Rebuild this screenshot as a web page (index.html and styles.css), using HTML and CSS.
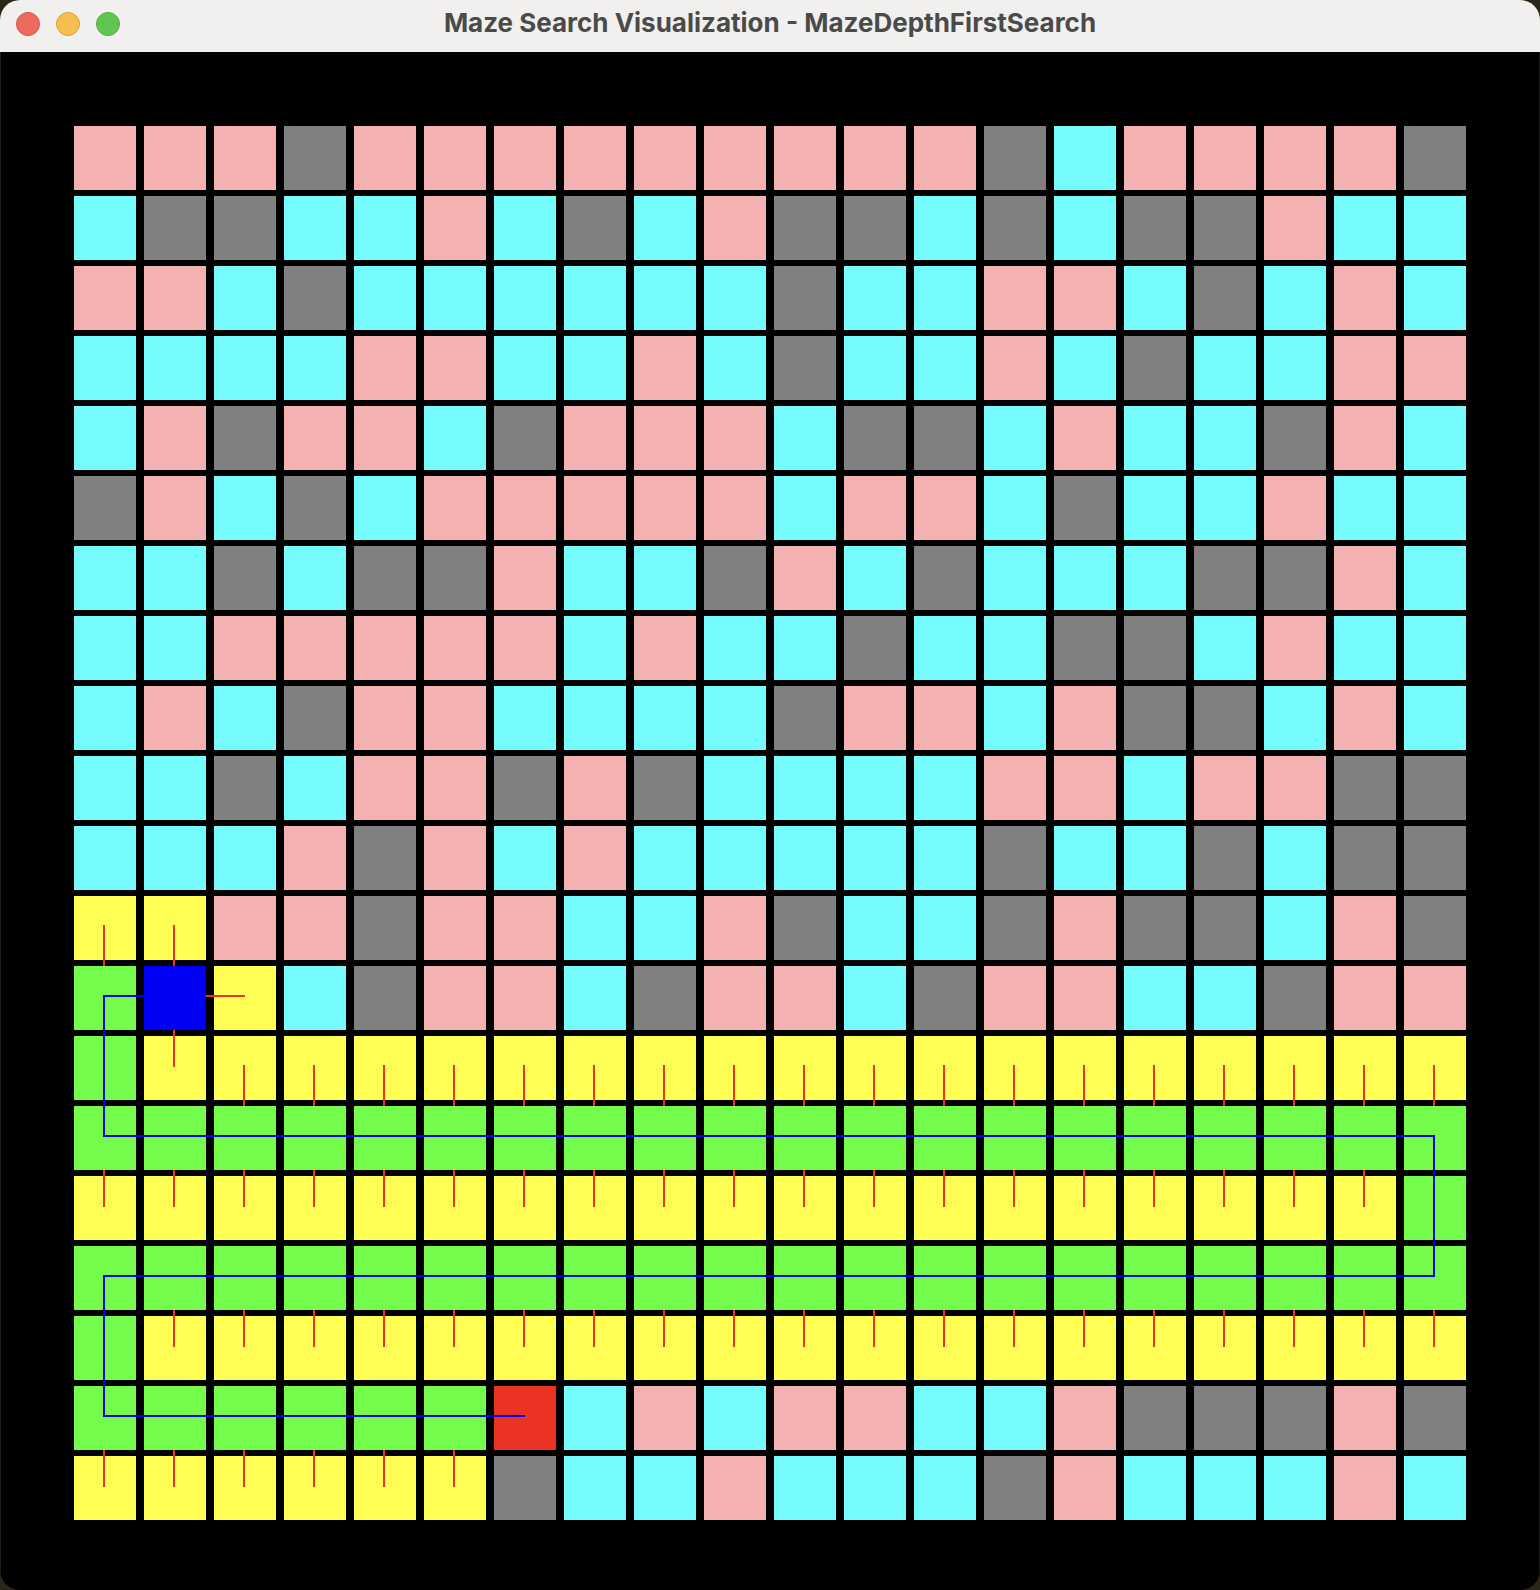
FILE: index.html
```html
<!DOCTYPE html>
<html lang="en">
<head>
<meta charset="utf-8">
<meta name="viewport" content="width=device-width, initial-scale=1">
<title>Maze Search Visualization - MazeDepthFirstSearch</title>
<link rel="stylesheet" href="styles.css">
</head>
<body>
<div class="window">
  <header class="titlebar">
    <div class="controls">
      <button class="control control-close" type="button" aria-label="Close"></button>
      <button class="control control-minimize" type="button" aria-label="Minimize"></button>
      <button class="control control-zoom" type="button" aria-label="Zoom"></button>
    </div>
    <h1 class="title">Maze Search Visualization - MazeDepthFirstSearch</h1>
  </header>
  <main class="stage">
    <div class="maze" id="maze">
      <svg class="lines" viewBox="0 0 1392 1394" preserveAspectRatio="none" aria-hidden="true">
        <path class="frontier" id="frontier"/>
        <path class="route" d="M451 1290H30V1150H1360V1010H30V870H70"/>
      </svg>
    </div>
  </main>
</div>
<script src="maze.js"></script>
</body>
</html>
```
FILE: styles.css
```css
* {
  box-sizing: border-box;
}

body {
  margin: 0;
  background: #2a2718;
  font-family: Inter, "Liberation Sans", sans-serif;
}

.window {
  display: flex;
  flex-direction: column;
  min-height: 100vh;
  overflow: hidden;
  border-radius: 20px;
  background: #000;
}

.titlebar {
  display: grid;
  grid-template-columns: 1fr auto 1fr;
  align-items: center;
  height: 52px;
  padding: 0 16px 4px;
  background: #f1f0ef;
}

.controls {
  display: flex;
  gap: 16px;
}

.control {
  width: 24px;
  height: 24px;
  padding: 0;
  border: 1px solid;
  border-radius: 50%;
}

.control-close {
  border-color: #d9534a;
  background: #ec6a5e;
}

.control-minimize {
  border-color: #dba03b;
  background: #f5bf4f;
}

.control-zoom {
  border-color: #4fac3f;
  background: #61c554;
}

.title {
  margin: 0;
  padding-bottom: 2px;
  color: #4a4a49;
  font-size: 26px;
  font-weight: 700;
  line-height: 32px;
  white-space: nowrap;
}

.stage {
  flex: 1;
  padding: 74px 73px 70px;
  border: solid #1c1c1a;
  border-width: 0 1px;
}

.maze {
  position: relative;
  display: grid;
  grid-template-columns: repeat(20, 1fr);
  gap: 6px 8px;
}

.cell {
  aspect-ratio: 62 / 64;
}

.blocked { background: #808080; }
.open { background: #75fbfd; }
.rough { background: #f3b1b2; }
.queued { background: #fffe54; }
.visited { background: #75fb4c; }
.current { background: #0000f5; }
.start { background: #ea3323; }

.lines {
  position: absolute;
  inset: 0;
  width: 100%;
  height: 100%;
}

.frontier,
.route {
  fill: none;
  stroke-width: 2px;
}

.frontier { stroke: #ea3323; }
.route { stroke: #0000f5; }
```
FILE: maze.js
```js
const rows = [
  "PPPGPPPPPPPPPGCPPPPG",
  "CGGCCPCGCPGGCGCGGPCC",
  "PPCGCCCCCCGCCPPCGCPC",
  "CCCCPPCCPCGCCPCGCCPP",
  "CPGPPCGPPPCGGCPCCGPC",
  "GPCGCPPPPPCPPCGCCPCC",
  "CCGCGGPCCGPCGCCCGGPC",
  "CCPPPPPCPCCGCCGGCPCC",
  "CPCGPPCCCCGPPCPGGCPC",
  "CCGCPPGPGCCCCPPCPPGG",
  "CCCPGPCPCCCCCGCCGCGG",
  "YYPPGPPCCPGCCGPGGCPG",
  "NBYCGPPCGPPCGPPCCGPP",
  "NYYYYYYYYYYYYYYYYYYY",
  "NNNNNNNNNNNNNNNNNNNN",
  "YYYYYYYYYYYYYYYYYYYN",
  "NNNNNNNNNNNNNNNNNNNN",
  "NYYYYYYYYYYYYYYYYYYY",
  "NNNNNNRCPCPPCCPGGGPG",
  "YYYYYYGCCPCCCGPCCCPC"
];

const kinds = {
  P: "rough", G: "blocked", C: "open", Y: "queued",
  N: "visited", B: "current", R: "start"
};

const maze = document.getElementById("maze");
const lines = maze.querySelector(".lines");
for (const row of rows) {
  for (const code of row) {
    const cell = document.createElement("div");
    cell.className = "cell " + kinds[code];
    maze.insertBefore(cell, lines);
  }
}

// Stubs join each queued cell to the cell it was reached from.
const pitch = 70;
const center = 30;
const fromBelow = (row, col) =>
  `M${col * pitch + center} ${row * pitch + center - 1}V${(row + 1) * pitch}`;
const fromAbove = (row, col) =>
  `M${col * pitch + center} ${row * pitch - 6}V${row * pitch + center + 1}`;

// Row, first column, last column, stub direction.
const runs = [
  [11, 0, 1, fromBelow],
  [13, 1, 1, fromAbove],
  [13, 2, 19, fromBelow],
  [15, 0, 18, fromAbove],
  [17, 1, 19, fromAbove],
  [19, 0, 5, fromAbove]
];

let path = "M132 870H171";
for (const [row, first, last, stub] of runs) {
  for (let col = first; col <= last; col++) {
    path += stub(row, col);
  }
}
document.getElementById("frontier").setAttribute("d", path);
```
